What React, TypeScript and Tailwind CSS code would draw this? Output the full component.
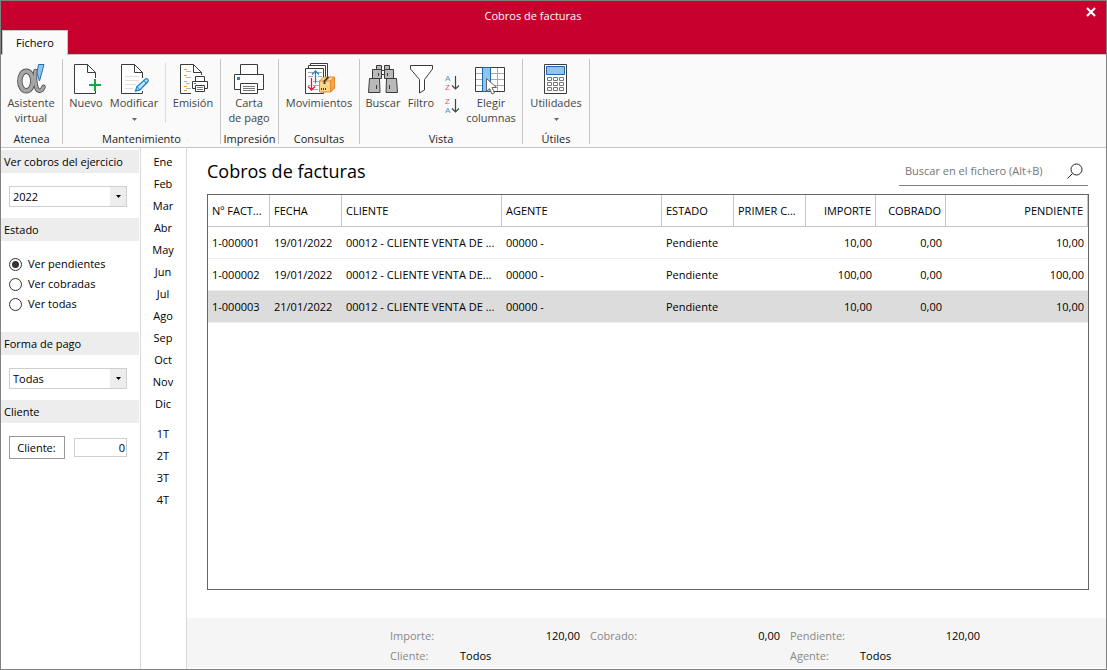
import { useState } from 'react';
import type { ReactNode } from 'react';
import clsx from 'clsx';

const INK = '#3b3b3b';

const MONTHS = ['Ene', 'Feb', 'Mar', 'Abr', 'May', 'Jun', 'Jul', 'Ago', 'Sep', 'Oct', 'Nov', 'Dic'];
const QUARTERS = ['1T', '2T', '3T', '4T'];

const COLUMNS = [
  { label: 'Nº FACT...', width: 'w-[62px]' },
  { label: 'FECHA', width: 'w-[72px]' },
  { label: 'CLIENTE', width: 'w-[160px]' },
  { label: 'AGENTE', width: 'w-[160px]' },
  { label: 'ESTADO', width: 'w-[72px]' },
  { label: 'PRIMER C...', width: 'w-[72px]' },
  { label: 'IMPORTE', width: 'w-[70px]', right: true },
  { label: 'COBRADO', width: 'w-[70px]', right: true },
  { label: 'PENDIENTE', width: 'w-auto', right: true },
];

const ROWS = [
  ['1-000001', '19/01/2022', '00012 - CLIENTE VENTA DE ...', '00000 -', 'Pendiente', '', '10,00', '0,00', '10,00'],
  ['1-000002', '19/01/2022', '00012 - CLIENTE VENTA DE...', '00000 -', 'Pendiente', '', '100,00', '0,00', '100,00'],
  ['1-000003', '21/01/2022', '00012 - CLIENTE VENTA DE ...', '00000 -', 'Pendiente', '', '10,00', '0,00', '10,00'],
];

/* ── Icons ── */

function Icon({ children }: { children: ReactNode }) {
  return (
    <svg className="size-8 shrink-0" viewBox="0 0 32 32" fill="none" stroke={INK} aria-hidden="true">
      {children}
    </svg>
  );
}

function AlphaIcon() {
  return (
    <Icon>
      <g strokeLinecap="round">
        <ellipse cx="11.3" cy="18" rx="6.5" ry="9.8" stroke="#555" strokeWidth="5.400" />
        <path d="M20.500 8c-1 7-.500 12 1 17 1.500 3.500 5 4 7-1" stroke="#555" strokeWidth="4.600" />
        <ellipse cx="11.3" cy="18" rx="6.5" ry="9.8" stroke="#a6a6a6" strokeWidth="3.600" />
        <path d="M20.500 8c-1 7-.500 12 1 17 1.500 3.500 5 4 7-1" stroke="#a6a6a6" strokeWidth="2.800" />
      </g>
      <path d="M23.500 1.500h5.500L24.500 18l-2.500-8z" fill="#8fc6ee" stroke="#1f6fb5" />
    </Icon>
  );
}

function NewIcon() {
  return (
    <Icon>
      <path d="M17.500 1.500H4.500v29h21V28V9.500z" fill="#fff" stroke="none" />
      <path d="M25.500 28v2.500h-21v-29h13l8 8V15M17.500 1.500v8h8" />
      <path d="M25 16v12M19 22h12" stroke="#14a84b" strokeWidth="2" />
    </Icon>
  );
}

function EditIcon() {
  return (
    <Icon>
      <path d="M17.500 1.500h-14v29h21v-21z" fill="#fff" stroke="none" />
      <path d="M24.500 28v2.500h-21v-29h13l8 8V15M16.500 1.500v8h8" />
      <path d="M7 13.500h14M7 17.500h14M7 21.500h11M7 25.500h8" stroke="#dedede" />
      <path d="M17.500 28l1.500-4.500 8.500-7.500c1.500-1 3.500.500 2.500 2.500L22 27z" fill="#bfe0f5" stroke="#1f86c8" strokeWidth="1.300" />
      <path d="M19 23.500l3 3.500M26 17.500l2.500 3" stroke="#1f86c8" />
    </Icon>
  );
}

function IssueIcon() {
  return (
    <Icon>
      <path d="M16.500 1.500h-13v29h21v-21z" fill="#fff" stroke="none" />
      <path d="M14 30.500H3.500v-29h13l8 8V12M16.500 1.500v8h8" />
      <path d="M7 6.500h3M7 12.500h3M7 18.500h3M7 23.500h3M7 27.500h3" stroke="#f0a03c" />
      <path d="M9 8.500h5M9 14.500h5M9 20.500h4M9 25.500h5" stroke="#b5b5b5" />
      <path d="M18.500 18.500v-5h9v5" fill="#fff" />
      <path d="M15.500 18.500h15v7h-15z" fill="#fff" />
      <path d="M18.500 22.500h9v6h-9z" fill="#fff" />
      <path d="M20 24.500h6M20 26.500h6" stroke="#777" />
      <path d="M17 20.500h2" stroke="#1f86c8" />
    </Icon>
  );
}

function PrinterIcon() {
  return (
    <Icon>
      <path d="M7.500 11.500v-10h17v10" fill="#fff" />
      <path d="M1.500 11.500h29v15h-29z" fill="#fff" />
      <path d="M7.500 20.500h17v10h-17z" fill="#fff" />
      <path d="M10 23.500h12M10 25.500h12M10 27.500h12" stroke="#777" />
      <path d="M4 14h3v3H4z" fill="#1f86c8" stroke="none" />
    </Icon>
  );
}

function MovementsIcon() {
  return (
    <Icon>
      <path d="M7.500 .500h17v25h-17z" fill="#fff" />
      <path d="M5.500 2.500h17v25h-17z" fill="#fff" />
      <path d="M2.500 5.500h18v25h-18z" fill="#fff" />
      <path d="M5 9.500h5M15 9.500h4M5 13.500h5M15 13.500h4M10 18.500h6M5 22.500h2M10 22.500h6M10 26.500h5" stroke="#aaa" />
      <path d="M12.500 20.500V8M9 11.500L12.500 8l3.500 3.500" stroke="#1f86c8" strokeWidth="1.300" />
      <path d="M8.500 15v12M5 23.500L8.500 27l3.500-3.500" stroke="#e0182d" strokeWidth="1.300" />
      <path d="M16.500 18l4-4h11v11l-4 4h-11z" fill="#f9d68a" stroke="#e8862b" />
      <path d="M27.500 29V18l4-4v11z" fill="#f3a64f" stroke="#e8862b" />
      <path d="M16.500 18h11" stroke="#e8862b" />
      <path d="M21.500 21v-3l4-4" stroke={INK} strokeWidth="1.800" />
      <path d="M18.500 25v2M20.500 25v2M22.500 25v2" />
    </Icon>
  );
}

function BinocularsIcon() {
  return (
    <Icon>
      <g fill="#b9b9b9">
        <path d="M14 7.500h4v4h-4z" fill="#fff" />
        <path d="M9.500 2.500h5v4h-5zM17.500 2.500h5v4h-5z" />
        <path d="M5.500 6.500h9v9h-9zM17.500 6.500h9v9h-9z" />
        <path d="M2.500 15.500h10l.500 14H1.500zM19.500 15.500h10l1 14H19z" />
      </g>
      <path d="M9.500 22v4M22.500 22v4M11.500 10v3M20.500 10v3" />
    </Icon>
  );
}

function FilterIcon() {
  return (
    <Icon>
      <path d="M5.500 2.500h22V6l-8 10.500V27l-5 3V16.500L5.500 6z" fill="#fff" />
    </Icon>
  );
}

function ColumnsIcon() {
  return (
    <Icon>
      <path d="M.500 4.500h29v24h-29z" fill="#fff" />
      <path d="M22.500 5v23M1 10.500h28M1 16.500h28M1 22.500h28" stroke="#a9a9a9" />
      <path d="M7.500 4.500h8v24h-8z" fill="#8fc6ee" stroke="#1b66ad" />
      <path d="M11.500 15.500v13l3-3 2.500 5.500 2.500-1-2.500-5.500h4.500z" fill="#fff" stroke="#666" />
    </Icon>
  );
}

function CalculatorIcon() {
  return (
    <Icon>
      <path d="M4.500 1.500h22v29h-22z" fill="#fff" />
      <path d="M6.500 3.500h18v8h-18z" fill="#8fc6ee" stroke="#1b66ad" />
      <path
        d="M7.500 14.500h4v3h-4zM13.500 14.500h4v3h-4zM19.500 14.500h4v3h-4zM7.500 19.500h4v3h-4zM13.500 19.500h4v3h-4zM19.500 19.500h4v3h-4zM7.500 24.500h4v3h-4zM13.500 24.500h4v3h-4zM19.500 24.500h4v3h-4z"
        stroke="#777"
      />
    </Icon>
  );
}

function SortIcon({ top, bottom }: { top: string; bottom: string }) {
  const color = (letter: string) => (letter === 'A' ? '#3d9ad6' : '#e85a68');
  return (
    <svg
      className="h-[18px] w-4 font-['Liberation_Sans',sans-serif] text-[8px]"
      viewBox="0 0 16 18"
      fill="none"
      aria-hidden="true"
    >
      <text x="0" y="8" fill={color(top)}>{top}</text>
      <text x="0" y="17" fill={color(bottom)}>{bottom}</text>
      <path d="M10.500 3v13M7 12.500l3.500 3.500 3.500-3.500" stroke="#444" strokeWidth="1.200" />
    </svg>
  );
}

/* ── Ribbon ── */

function RibbonGroup({ title, width, children }: { title: string; width: string; children: ReactNode }) {
  return (
    <section className={clsx('flex flex-col border-r border-[#c6c6c6] pt-1', width)}>
      <div className="flex flex-1 items-start">{children}</div>
      <h2 className="text-center leading-[11px] whitespace-nowrap text-[#222]">{title}</h2>
    </section>
  );
}

interface RibbonButtonProps {
  icon: ReactNode;
  lines: string[];
  width: string;
  menu?: boolean;
}

function RibbonButton({ icon, lines, width, menu }: RibbonButtonProps) {
  return (
    <button type="button" className={clsx('flex flex-col items-center text-[#444] hover:bg-[#ececec]', width)}>
      {icon}
      {lines.map((line) => (
        <span key={line} className="leading-[15px] whitespace-nowrap">{line}</span>
      ))}
      {menu && (
        <svg className="mt-2 h-[3px] w-[5px]" viewBox="0 0 5 3" fill="#666" aria-hidden="true">
          <path d="M0 0h5L2.500 3z" />
        </svg>
      )}
    </button>
  );
}

function Ribbon() {
  return (
    <div className="flex h-[94px] border-t border-b border-[#c6c6c6] bg-[#fafafa] pt-1 pb-[3px]">
      <RibbonGroup title="Atenea" width="w-[62px]">
        <RibbonButton icon={<AlphaIcon />} lines={['Asistente', 'virtual']} width="w-[60px]" />
      </RibbonGroup>
      <RibbonGroup title="Mantenimiento" width="w-[158px]">
        <RibbonButton icon={<NewIcon />} lines={['Nuevo']} width="w-[46px]" />
        <RibbonButton icon={<EditIcon />} lines={['Modificar']} width="w-[50px]" menu />
        <div className="ml-1.5 h-[60px] w-px bg-[#dcdcdc]" />
        <RibbonButton icon={<IssueIcon />} lines={['Emisión']} width="w-[54px]" />
      </RibbonGroup>
      <RibbonGroup title="Impresión" width="w-[58px]">
        <RibbonButton icon={<PrinterIcon />} lines={['Carta', 'de pago']} width="w-14" />
      </RibbonGroup>
      <RibbonGroup title="Consultas" width="w-[81px]">
        <RibbonButton icon={<MovementsIcon />} lines={['Movimientos']} width="w-20" />
      </RibbonGroup>
      <RibbonGroup title="Vista" width="w-[163px]">
        <RibbonButton icon={<BinocularsIcon />} lines={['Buscar']} width="ml-[3px] w-10" />
        <RibbonButton icon={<FilterIcon />} lines={['Filtro']} width="w-9" />
        <div className="flex w-[25px] flex-col gap-[5px] pt-2.5 pl-1.5">
          <button type="button" aria-label="Orden ascendente"><SortIcon top="A" bottom="Z" /></button>
          <button type="button" aria-label="Orden descendente"><SortIcon top="Z" bottom="A" /></button>
        </div>
        <RibbonButton icon={<ColumnsIcon />} lines={['Elegir', 'columnas']} width="w-[54px]" />
      </RibbonGroup>
      <RibbonGroup title="Útiles" width="w-[67px]">
        <RibbonButton icon={<CalculatorIcon />} lines={['Utilidades']} width="w-[66px]" menu />
      </RibbonGroup>
    </div>
  );
}

/* ── Filters sidebar ── */

function SectionTitle({ children }: { children: ReactNode }) {
  return <h2 className="h-[23px] bg-[#ededed] pl-[3px] leading-[23px] whitespace-nowrap">{children}</h2>;
}

function Dropdown({ label, options }: { label: string; options: string[] }) {
  return (
    <div className="relative mx-2 mt-[13px] mb-[11px] w-[118px]">
      <select
        aria-label={label}
        className="block h-[21px] w-full appearance-none border border-[#cfcfcf] bg-white pt-0.5 pl-[3px] outline-none"
      >
        {options.map((option) => (
          <option key={option}>{option}</option>
        ))}
      </select>
      <span className="pointer-events-none absolute inset-y-px right-px flex w-4 items-center justify-center bg-[#ededed]">
        <svg className="h-[3px] w-[5px]" viewBox="0 0 5 3" aria-hidden="true">
          <path d="M0 0h5L2.500 3z" />
        </svg>
      </span>
    </div>
  );
}

function Sidebar() {
  const [status, setStatus] = useState('Ver pendientes');

  return (
    <aside className="w-[140px] shrink-0 border-r border-[#dadada] pt-0.5 pr-px">
      <SectionTitle>Ver cobros del ejercicio</SectionTitle>
      <Dropdown label="Ejercicio" options={['2022', '2021']} />

      <SectionTitle>Estado</SectionTitle>
      <div className="px-2 pt-[13px] pb-[18px]">
        {['Ver pendientes', 'Ver cobradas', 'Ver todas'].map((option) => (
          <label key={option} className="flex h-5 items-center gap-1.5">
            <input
              type="radio"
              name="estado"
              checked={status === option}
              onChange={() => setStatus(option)}
              className="size-[13px] appearance-none rounded-full border border-[#333] bg-white bg-clip-content p-[2px] checked:bg-[#333]"
            />
            {option}
          </label>
        ))}
      </div>

      <SectionTitle>Forma de pago</SectionTitle>
      <Dropdown label="Forma de pago" options={['Todas', 'Contado']} />

      <SectionTitle>Cliente</SectionTitle>
      <div className="flex items-center gap-[9px] px-2 pt-[13px]">
        <button type="button" className="h-[23px] w-14 border border-[#999] bg-white pt-0.5 pr-px">Cliente:</button>
        <input
          aria-label="Código de cliente"
          defaultValue="0"
          className="h-[19px] w-[53px] border border-[#cfcfcf] pr-px text-right outline-none"
        />
      </div>
    </aside>
  );
}

function PeriodList() {
  return (
    <nav className="flex w-[46px] shrink-0 flex-col border-r border-[#dadada] pt-[3px]">
      {MONTHS.map((month) => (
        <button key={month} type="button" className="h-[22px] pr-px hover:bg-[#ededed]">{month}</button>
      ))}
      <div className="mt-2 flex flex-col">
        {QUARTERS.map((quarter) => (
          <button key={quarter} type="button" className="h-[22px] pr-px hover:bg-[#ededed]">{quarter}</button>
        ))}
      </div>
    </nav>
  );
}

/* ── Invoice payments table ── */

function PaymentsTable() {
  const [selected, setSelected] = useState(2);

  return (
    <div className="flex-1 border border-[#666]">
      <table className="w-full table-fixed border-separate border-spacing-0">
        <thead>
          <tr>
            {COLUMNS.map(({ label, width, right }) => (
              <th
                key={label}
                className={clsx(
                  'h-8 truncate border-r border-b border-[#c6c6c6] px-1 pt-0.5 font-normal',
                  width,
                  right ? 'text-right' : 'text-left',
                )}
              >
                {label}
              </th>
            ))}
          </tr>
        </thead>
        <tbody>
          {ROWS.map((row, i) => (
            <tr key={row[0]} onClick={() => setSelected(i)} className={i === selected ? 'bg-[#dcdcdc]' : 'bg-white'}>
              {row.map((cell, j) => (
                <td
                  key={COLUMNS[j].label}
                  className={clsx(
                    'h-8 border-b border-[#ededed] px-1 pt-0.5 whitespace-nowrap',
                    COLUMNS[j].right ? 'text-right' : 'text-left',
                  )}
                >
                  {cell}
                </td>
              ))}
            </tr>
          ))}
        </tbody>
      </table>
    </div>
  );
}

function Total({ label, amount, filter }: { label: string; amount: string; filter?: [string, string] }) {
  return (
    <dl className="w-[190px] leading-5">
      <div className="flex justify-between">
        <dt className="text-[#888]">{label}</dt>
        <dd>{amount}</dd>
      </div>
      {filter && (
        <div className="flex">
          <dt className="w-[70px] text-[#888]">{filter[0]}</dt>
          <dd>{filter[1]}</dd>
        </div>
      )}
    </dl>
  );
}

export default function App() {
  return (
    <div className="flex min-h-screen flex-col border border-[#808080] bg-white font-['Open_Sans','Noto_Sans',sans-serif] text-[11px] text-black">
      <header className="flex flex-col bg-[#c8002d]">
        <div className="flex h-[29px] items-center pr-2.5 pl-[7px] text-white">
          <h1 className="flex-1 pt-0.5 pr-7 text-center">Cobros de facturas</h1>
          <button type="button" aria-label="Cerrar" className="mb-2">
            <svg className="size-2.5" viewBox="0 0 10 10" stroke="#fff" strokeWidth="2.200" aria-hidden="true">
              <path d="M1 1l8 8M9 1L1 9" />
            </svg>
          </button>
        </div>
        <div className="flex pl-px">
          <button type="button" className="relative z-10 -mb-px h-[25px] w-[66px] border border-b-0 border-[#c6c6c6] bg-[#fafafa]">
            Fichero
          </button>
        </div>
      </header>

      <Ribbon />

      <div className="flex flex-1">
        <Sidebar />
        <PeriodList />
        <div className="flex min-w-0 flex-1 flex-col">
          <main className="flex flex-1 flex-col pr-[17px] pb-7 pl-5">
            <div className="flex h-[46px] items-start justify-between">
              <h2 className="pt-2.5 text-[18px] leading-[26px]">Cobros de facturas</h2>
              <label className="mt-2 mr-px flex h-[30px] w-[189px] items-center justify-between border-b border-[#808080] pr-[5px] pl-1.5">
                <input
                  type="search"
                  aria-label="Buscar en el fichero"
                  placeholder="Buscar en el fichero (Alt+B)"
                  className="w-[150px] bg-transparent pt-0.5 outline-none placeholder:text-[#767676]"
                />
                <svg className="size-4" viewBox="0 0 16 16" fill="none" stroke="#222" aria-hidden="true">
                  <circle cx="9.500" cy="6.500" r="5.500" />
                  <path d="M5.500 10.500L.500 15.500" />
                </svg>
              </label>
            </div>
            <PaymentsTable />
          </main>
          <footer className="mb-px flex h-[50px] gap-2.5 bg-[#f5f5f5] pt-2 pl-[203px]">
            <Total label="Importe:" amount="120,00" filter={['Cliente:', 'Todos']} />
            <Total label="Cobrado:" amount="0,00" />
            <Total label="Pendiente:" amount="120,00" filter={['Agente:', 'Todos']} />
          </footer>
        </div>
      </div>
    </div>
  );
}
